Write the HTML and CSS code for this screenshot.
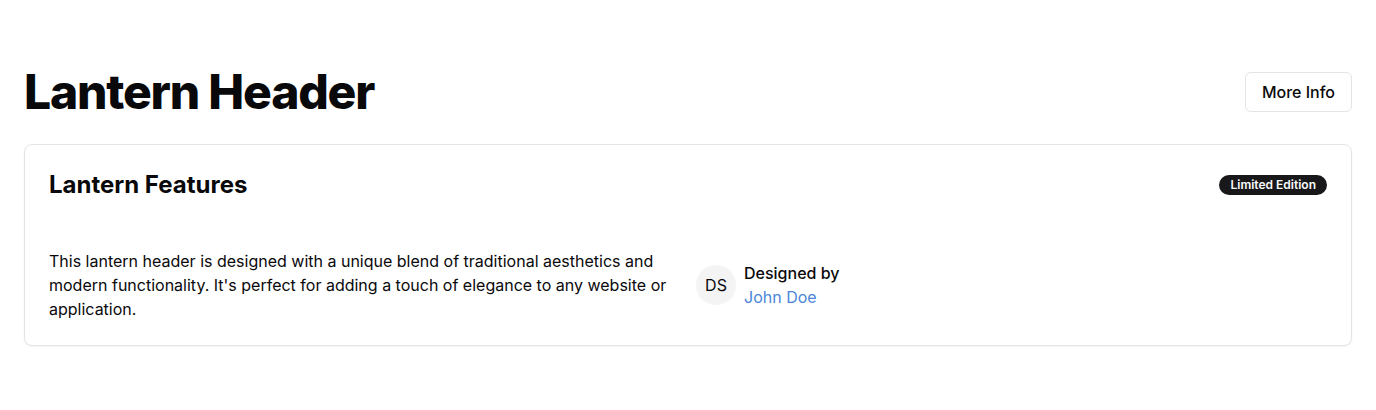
FILE: index.html
```html
<!DOCTYPE html>
<html lang="en">
<head>
<meta charset="utf-8">
<title>Lantern Header</title>
<link rel="stylesheet" href="styles.css">
</head>
<body>
<main class="page">
  <header class="top">
    <h1 class="title">Lantern Header</h1>
    <button class="btn">More Info</button>
  </header>
  <section class="card">
    <div class="card-head">
      <h2 class="card-title">Lantern Features</h2>
      <span class="badge">Limited Edition</span>
    </div>
    <div class="card-body">
      <p class="desc">This lantern header is designed with a unique blend of traditional aesthetics and modern functionality. It's perfect for adding a touch of elegance to any website or application.</p>
      <div class="author">
        <div class="avatar">DS</div>
        <div class="author-text">
          <div class="by">Designed by</div>
          <a class="name" href="#">John Doe</a>
        </div>
      </div>
    </div>
  </section>
</main>
</body>
</html>
```
FILE: styles.css
```css
* { box-sizing: border-box; }
html, body { margin: 0; background: #fff; }
body {
  font-family: Inter, "Noto Sans", sans-serif;
  color: #09090b;
}
.page { padding: 68px 24px 24px; }
.top {
  display: flex;
  align-items: center;
  justify-content: space-between;
  margin-bottom: 28px;
}
.title {
  margin: 0;
  font-size: 48px;
  line-height: 48px;
  font-weight: 800;
  letter-spacing: -0.025em;
}
.btn {
  height: 40px;
  padding: 0 16px;
  font: 500 16px/24px Inter, sans-serif;
  color: #09090b;
  background: #fff;
  border: 1px solid #e4e4e7;
  border-radius: 6px;
}
.card {
  border: 1px solid #e4e4e7;
  border-radius: 8px;
  background: #fff;
  box-shadow: 0 1px 2px rgba(0,0,0,0.05);
}
.card-head {
  display: flex;
  align-items: center;
  justify-content: space-between;
  padding: 24px;
}
.card-title {
  margin: 0;
  font-size: 24px;
  line-height: 32px;
  font-weight: 700;
}
.badge {
  display: inline-block;
  background: #18181b;
  color: #fafafa;
  font-size: 12px;
  line-height: 16px;
  font-weight: 600;
  padding: 2px 11px;
  border-radius: 9999px;
}
.card-body {
  display: grid;
  grid-template-columns: 1fr 1fr;
  gap: 16px;
  align-items: center;
  padding: 24px 24px 24px;
}
.desc {
  margin: 0;
  font-size: 16px;
  line-height: 24px;
}
.author {
  display: flex;
  align-items: center;
  gap: 8px;
}
.avatar {
  width: 40px;
  height: 40px;
  border-radius: 50%;
  background: #f4f4f5;
  display: flex;
  align-items: center;
  justify-content: center;
  font-size: 16px;
}
.author-text { font-size: 16px; line-height: 24px; }
.by { font-weight: 500; }
.name { color: #4a86d8; text-decoration: none; }
```
